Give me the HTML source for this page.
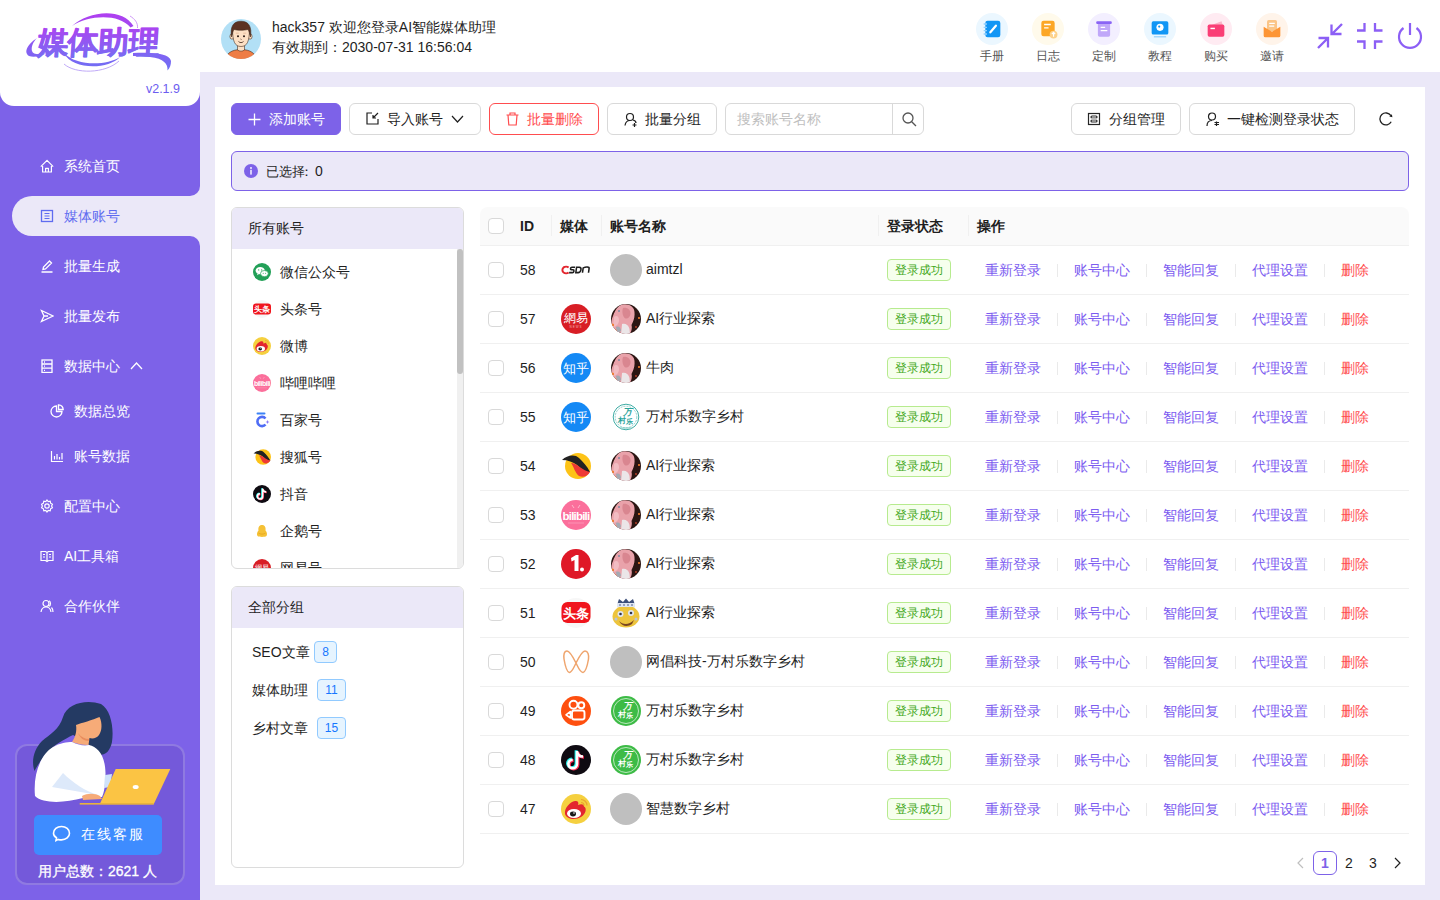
<!DOCTYPE html>
<html><head><meta charset="utf-8">
<style>
*{box-sizing:border-box;margin:0;padding:0}
html,body{width:1440px;height:900px;overflow:hidden;background:#ebe8f8;font-family:"Liberation Sans",sans-serif;color:#1f1f1f}
.abs{position:absolute}
#sb{position:absolute;left:0;top:0;width:200px;height:900px;background:#ebe8f8}
.pur{position:absolute;background:#7d62e8}
.logo{position:absolute;left:0;top:0;width:200px;height:106px;background:#fff;border-radius:0 0 14px 14px}
.mi{position:absolute;left:0;width:200px;height:40px;color:#fff;font-size:14px;line-height:40px}
.mi svg{position:absolute;top:13px}
.mi span{position:absolute;left:64px}
#hd{position:absolute;left:200px;top:0;width:1240px;height:72px;background:#fff}
#card{position:absolute;left:215px;top:87px;width:1210px;height:798px;background:#fff}
.btn{position:absolute;top:103px;height:32px;border:1px solid #d9d9d9;border-radius:6px;background:#fff;font-size:14px;line-height:30px;color:#1f1f1f;white-space:nowrap}
.btn svg{position:absolute;top:8px}
.btn span{position:absolute}
.tb{position:absolute;top:13px;width:32px;height:60px}
.tc{position:absolute;left:0;top:0;width:32px;height:32px;border-radius:50%}
.tc svg{position:absolute;left:6px;top:6px;width:20px;height:20px}
.tl{position:absolute;left:-10px;width:52px;top:34.5px;text-align:center;font-size:12px;line-height:17px;color:#555}
.pri{background:#7d62e8;border-color:#7d62e8;color:#fff}
.panel{position:absolute;left:231px;width:233px;border:1px solid #dcdcdc;border-radius:6px;background:#fff;overflow:hidden}
.ph{position:absolute;left:0;top:0;width:100%;height:41px;background:#ebe8f8;font-size:14px;line-height:41px;padding-left:16px;color:#1f1f1f}
.li{position:absolute;left:21px;height:20px;width:200px}
.li svg{position:absolute;left:0;top:1px}
.li span{position:absolute;left:27px;top:0;font-size:14px;line-height:20px;color:#1f1f1f}
.bdg{position:absolute;height:22px;border:1px solid #91caff;background:#e6f4ff;color:#1677ff;border-radius:4px;font-size:12px;line-height:20px;text-align:center}
.cb{position:absolute;width:16px;height:16px;border:1px solid #d9d9d9;border-radius:4px;background:#fff}
.th{position:absolute;top:216px;font-size:14px;line-height:20px;font-weight:700;color:#1f1f1f}
.td{position:absolute;font-size:14px;line-height:20px;color:#1f1f1f;white-space:nowrap}
.av{width:32px;height:32px;border-radius:50%}
.avs{display:block}
.tag{position:absolute;width:64px;height:22px;border:1px solid #b7eb8f;background:#f6ffed;color:#43a81a;border-radius:4px;font-size:12px;line-height:20px;text-align:center}
.halt{font-feature-settings:"halt"}
</style></head><body>
<div id="sb">
  <div class="pur" style="left:0;top:0;width:200px;height:196px;border-radius:0 0 10px 0"></div>
  <div class="pur" style="left:0;top:186px;width:40px;height:60px"></div>
  <div class="pur" style="left:0;top:236px;width:200px;height:664px;border-radius:0 10px 0 0"></div>
  <div class="abs" style="left:12px;top:196px;width:188px;height:40px;background:#ebe8f8;border-radius:20px 0 0 20px"></div>
  <div class="logo">
    <svg class="abs" style="left:0;top:0" width="200" height="106" viewBox="0 0 200 106">
      <defs>
        <linearGradient id="lg" x1="0" y1="0" x2="0" y2="1" gradientUnits="userSpaceOnUse">
          <stop offset="0" stop-color="#b13ef0"/>
          <stop offset="1" stop-color="#6f6cf2"/>
        </linearGradient>
        <linearGradient id="lg2" x1="0" y1="12" x2="0" y2="72" gradientUnits="userSpaceOnUse">
          <stop offset="0" stop-color="#b23df0"/>
          <stop offset="1" stop-color="#6c72f4"/>
        </linearGradient>
      <linearGradient id="lg3" x1="0" y1="-30" x2="0" y2="4" gradientUnits="userSpaceOnUse"><stop offset="0" stop-color="#b33ef0"/><stop offset="1" stop-color="#7a6af3"/></linearGradient>
      </defs>
      <path d="M72 26 C 88 11, 122 7, 133.5 26 L 130.5 27.5 C 119 13, 88 15, 72 26 Z" fill="url(#lg2)"/>
      <path d="M130 16 C 135 19, 138 23, 137.5 28" stroke="#c98df6" stroke-width="0.9" fill="none"/>
      <path d="M37 38 C 28 44, 23 52, 29 56 C 34 58, 41 56, 47 53 C 40 55, 33 55, 32 51 C 31 47, 33 42, 37 38 Z" fill="url(#lg2)"/>
      <path d="M64 53 C 72 70, 108 70, 120 57 C 106 66, 76 66, 64 53 Z" fill="url(#lg2)"/>
      <path d="M64 64 C 75 74, 105 74, 119 61" stroke="#b9a0f6" stroke-width="0.9" fill="none"/>
      <path d="M133 53 C 150 52, 170 53, 171 61 C 171 65, 170 68, 167.5 70.5 C 168 64, 164 58.5, 150 57 C 145 56.5, 138 56, 133 56 Z" fill="url(#lg2)"/>
      <text x="0" y="0" font-size="31" font-weight="900" fill="url(#lg3)" stroke="url(#lg3)" stroke-width="0.7" stroke-linejoin="round" letter-spacing="-0.5" transform="translate(36.5,52.5) skewX(-4)">媒体助理</text>
    </svg>
    <div class="abs" style="right:20px;top:80.5px;font-size:12.5px;color:#6c5cf0;line-height:17px">v2.1.9</div>
  </div>
  <div class="mi" style="top:146px"><svg style="left:40px" width="14" height="14" viewBox="0 0 14 14" fill="none" stroke="#fff" stroke-width="1.3"><path d="M0.8 7.6 L7 1.3 L13.2 7.6 M2.6 5.8 V13 H11.4 V5.8 M5.6 13 V9.4 H8.4 V13" stroke-width="1.2" stroke-linejoin="round"/></svg><span>系统首页</span></div>
  <div class="mi" style="top:196px;color:#5f6cf0"><svg style="left:40px" width="14" height="14" viewBox="0 0 14 14" fill="none" stroke="#5f6cf0" stroke-width="1.3"><rect x="1.5" y="1.5" width="11" height="11"/><path d="M4.5 4.5 H9.5 M4.5 7 H9.5 M4.5 9.5 H9.5" stroke-width="1"/></svg><span>媒体账号</span></div>
  <div class="mi" style="top:246px"><svg style="left:40px" width="14" height="14" viewBox="0 0 14 14" fill="none" stroke="#fff" stroke-width="1.3"><path d="M1.5 13 H12.5 M3 10.5 L3.5 8 L9.5 2 L11.5 4 L5.5 10 Z"/></svg><span>批量生成</span></div>
  <div class="mi" style="top:296px"><svg style="left:40px" width="14" height="14" viewBox="0 0 14 14" fill="none" stroke="#fff" stroke-width="1.3"><path d="M1.5 1.5 L13 7 L1.5 12.5 L4 7 Z M4 7 H8"/></svg><span>批量发布</span></div>
  <div class="mi" style="top:346px"><svg style="left:40px" width="14" height="14" viewBox="0 0 14 14" fill="none" stroke="#fff" stroke-width="1.3"><rect x="2" y="1" width="10" height="12.5"/><path d="M2 5 H12 M2 9.2 H12 M4 3 H5 M4 7.1 H5 M4 11.3 H5"/></svg><span>数据中心</span><svg style="left:130px;top:15px" width="13" height="9" viewBox="0 0 13 9" fill="none" stroke="#fff" stroke-width="1.3"><path d="M1 8 L6.5 2 L12 8"/></svg></div>
  <div class="mi" style="top:391px"><svg style="left:50px" width="14" height="14" viewBox="0 0 14 14" fill="none" stroke="#fff" stroke-width="1.3"><path d="M6.5 2 A5.5 5.5 0 1 0 12 7.5 H6.5 Z M8.5 0.8 A5 5 0 0 1 13.2 5.5 H8.5 Z"/></svg><span style="left:74px">数据总览</span></div>
  <div class="mi" style="top:436px"><svg style="left:50px" width="14" height="14" viewBox="0 0 14 14" fill="none" stroke="#fff" stroke-width="1.2"><path d="M1.5 2 V12.5 H13 M4.5 10.5 V7 M7 10.5 V5 M9.5 10.5 V8 M12 10.5 V4"/></svg><span style="left:74px">账号数据</span></div>
  <div class="mi" style="top:486px"><svg style="left:40px" width="14" height="14" viewBox="0 0 14 14" fill="none" stroke="#fff" stroke-width="1.2"><path d="M7 1 L8.2 2.6 L10.2 2.2 L10.6 4.2 L12.4 5.2 L11.6 7 L12.4 8.8 L10.6 9.8 L10.2 11.8 L8.2 11.4 L7 13 L5.8 11.4 L3.8 11.8 L3.4 9.8 L1.6 8.8 L2.4 7 L1.6 5.2 L3.4 4.2 L3.8 2.2 L5.8 2.6 Z"/><circle cx="7" cy="7" r="2.2"/></svg><span>配置中心</span></div>
  <div class="mi" style="top:536px"><svg style="left:40px" width="14" height="14" viewBox="0 0 14 14" fill="none" stroke="#fff" stroke-width="1.2"><path d="M1 2.5 H5.5 L7 3.5 L8.5 2.5 H13 V11.5 H8.5 L7 12.5 L5.5 11.5 H1 Z M7 3.5 V12.5 M3 5.5 H5 M3 8 H5 M9 5.5 H11 M9 8 H11"/></svg><span>AI工具箱</span></div>
  <div class="mi" style="top:586px"><svg style="left:40px" width="14" height="14" viewBox="0 0 14 14" fill="none" stroke="#fff" stroke-width="1.2"><circle cx="6" cy="4.5" r="3"/><path d="M1 13 C1.5 9.5 3.5 8 6 8 C8.5 8 10.5 9.5 11 13 M9 1.8 C11 2.5 11 6.5 9 7.2 M11.5 8.5 C12.5 9.5 13 11 13 13"/></svg><span>合作伙伴</span></div>

  <div class="abs" style="left:15px;top:744px;width:170px;height:141px;border-radius:12px;background:#7459da;border:2px solid rgba(255,255,255,0.2)"></div>
  <svg class="abs" style="left:25px;top:695px" width="150" height="120" viewBox="0 0 150 120">
    <path d="M38 22 C 42 8, 62 4, 76 9 C 86 15, 89 33, 87 47 C 85 56, 81 60, 74 60 L 60 46 L 48 40 C 40 44, 28 50, 20 60 C 14 68, 11 73, 9.5 76 C 6 66, 9 54, 17 46 C 25 39, 34 35, 38 22 Z" fill="#243a63"/>
    <path d="M51 30 C 56 28, 68 25, 74.5 22 C 77.5 28, 77 36, 74 40 C 72 43, 68 44, 64.5 43 L 63.5 50 C 58 50, 52 49, 47 47 C 50.5 42, 52 36, 51 30 Z" fill="#f6ab78"/>
    <path d="M53 38 C 56 42, 60 44, 64 44 L 63.8 46 C 59 46, 55 43, 53 38 Z" fill="#e98d5e"/>
    <path d="M10 101 C 8 80, 15 60, 28 52 C 35 48, 42 47, 47 47 C 53 50, 59 51, 64 50 C 73 52, 80 60, 80.5 78 C 80.5 90, 79 98, 77 102 L 58 103 C 40 108, 18 109, 10 101 Z" fill="#fff"/>
    <path d="M27 92 L 38 78 C 48 88, 60 96, 73 100 Z" fill="#dde9fa"/>
    <path d="M80 80 L 87 79 L 85 92 L 79 93 Z" fill="#cfe2fa"/>
    <path d="M57 101 C 62 98, 70 98, 75 101 L 77 104 L 58 105 Z" fill="#f6ab78"/>
    <path d="M90.7 74 H 145.3 L 128.7 109.3 H 74.7 Z" fill="#fbc444"/>
    <rect x="54.7" y="108" width="74" height="1.6" fill="#e8b23c"/>
    <ellipse cx="110.7" cy="92" rx="3" ry="2" fill="#fff"/>
  </svg>
  <div class="abs" style="left:34px;top:815px;width:128px;height:40px;border-radius:5px;background:#3e8cff;color:#fff;font-size:14px;line-height:38px">
    <svg class="abs" style="left:18px;top:10px" width="19" height="18" viewBox="0 0 19 18" fill="none" stroke="#fff" stroke-width="1.6"><path d="M4 15.5 L4.5 12.8 C2.6 11.6 1.5 10 1.5 8.2 C1.5 4.5 5 1.5 9.5 1.5 C14 1.5 17.5 4.5 17.5 8.2 C17.5 11.9 14 14.9 9.5 14.9 C8.4 14.9 7.3 14.7 6.3 14.4 Z"/></svg>
    <span class="abs" style="left:47px;letter-spacing:2px">在线客服</span>
  </div>
  <div class="abs" style="left:38px;top:861px;font-size:14px;line-height:20px;color:#fff;font-weight:500;-webkit-text-stroke:0.3px #fff">用户总数：2621 人</div>
</div>
<div id="hd">
  <svg class="abs" style="left:21px;top:19px" width="40" height="40" viewBox="0 0 40 40">
    <circle cx="20" cy="20" r="20" fill="#b2e0f6"/>
    <clipPath id="avc"><circle cx="20" cy="20" r="20"/></clipPath>
    <g clip-path="url(#avc)" stroke="#3d2418" stroke-width="0.55">
      <path d="M4 42 C 5 34, 11 30.5, 20 30.5 C 29 30.5, 35 34, 36 42 Z" fill="#ee7d45"/>
      <path d="M16.5 25 H23.5 V31 C 21.5 32.5, 18.5 32.5, 16.5 31 Z" fill="#fde0c4"/>
      <ellipse cx="11" cy="17.5" rx="2.1" ry="2.7" fill="#fde0c4"/>
      <ellipse cx="29" cy="17.5" rx="2.1" ry="2.7" fill="#fde0c4"/>
      <path d="M11.5 9 C 11.5 23, 14 27.5, 20 27.5 C 26 27.5, 28.5 23, 28.5 9 Z" fill="#fde0c4"/>
      <path d="M10.5 18 C 9 8, 12 2.2, 20 2.2 C 28 2.2, 31 8, 29.5 18 C 28.5 14, 28 12, 27 10.5 C 23 11.5, 16 11.5, 13 10.5 C 12 12, 11.5 14, 10.5 18 Z" fill="#5b3222"/>
    </g>
    <circle cx="17" cy="17.2" r="1" fill="#2a1a14"/>
    <circle cx="23" cy="17.2" r="1" fill="#2a1a14"/>
    <path d="M14.8 14.2 H17.8 M22.2 14.2 H25.2" stroke="#e3b898" stroke-width="0.8"/>
    <path d="M19.5 20 L20.5 20.5" stroke="#3d2418" stroke-width="0.7"/>
    <path d="M17.5 22.5 C 19 24, 21 24, 22.5 22.5" stroke="#3d2418" stroke-width="0.8" fill="none"/>
  </svg>
  <div class="abs" style="left:72px;top:17px;font-size:14px;line-height:20px;color:#1f1f1f;white-space:nowrap">hack357 欢迎您登录AI智能媒体助理</div>
  <div class="abs" style="left:72px;top:37px;font-size:14px;line-height:20px;color:#1f1f1f;white-space:nowrap">有效期到：2030-07-31 16:56:04</div>

  <div class="tb" style="left:776px"><div class="tc" style="background:#ebf7ff"><svg width="18" height="18" viewBox="0 0 18 18"><rect x="3" y="1.5" width="13.5" height="15" rx="2" fill="#1296f5"/><path d="M1.5 4.5 H4.5 M1.5 7.5 H4.5 M1.5 10.5 H4.5 M1.5 13.5 H4.5" stroke="#8fd0ff" stroke-width="1.2"/><path d="M7.5 12 L12.5 6" stroke="#fff" stroke-width="2" stroke-linecap="round"/></svg></div><div class="tl">手册</div></div>
  <div class="tb" style="left:832px"><div class="tc" style="background:#fffaeb"><svg width="18" height="18" viewBox="0 0 18 18"><rect x="3" y="1.5" width="12" height="14" rx="2" fill="#fca726"/><path d="M5.5 5 H11.5 M5.5 8 H9.5" stroke="#fff" stroke-width="1.3"/><circle cx="14" cy="14" r="3.5" fill="#fdd28a"/><path d="M14 12 V16 M12.5 13.5 L14 12 L15.5 13.5" stroke="#fff" stroke-width="1"/></svg></div><div class="tl">日志</div></div>
  <div class="tb" style="left:888px"><div class="tc" style="background:#f3efff"><svg width="18" height="18" viewBox="0 0 18 18"><rect x="3.5" y="3" width="11" height="13" rx="1.5" fill="#c0a7f9"/><rect x="2" y="2" width="14" height="2.5" rx="1" fill="#8a64f5"/><path d="M6 7.5 H10 M6 10.5 H12" stroke="#fff" stroke-width="1.2"/></svg></div><div class="tl">定制</div></div>
  <div class="tb" style="left:944px"><div class="tc" style="background:#ebf7ff"><svg width="18" height="18" viewBox="0 0 18 18"><rect x="1.5" y="2" width="15" height="12" rx="1.5" fill="#1296f5"/><circle cx="9" cy="7.5" r="3.2" fill="#fff"/><circle cx="8.3" cy="6.8" r="1" fill="#1296f5"/><path d="M3.5 16 H14.5" stroke="#9dd4fb" stroke-width="1.2"/></svg></div><div class="tl">教程</div></div>
  <div class="tb" style="left:1000px"><div class="tc" style="background:#ffebf2"><svg width="18" height="18" viewBox="0 0 18 18"><path d="M5 5.5 L14 2 L15 5.5 Z" fill="#fbb4c8"/><rect x="1.5" y="5" width="15" height="11" rx="1.5" fill="#fa3e76"/><path d="M4 8.5 H8" stroke="#fff" stroke-width="1.3"/></svg></div><div class="tl">购买</div></div>
  <div class="tb" style="left:1056px"><div class="tc" style="background:#fff4ea"><svg width="18" height="18" viewBox="0 0 18 18"><rect x="4.5" y="1" width="9" height="10" rx="1.5" fill="#fbc587"/><path d="M6.5 4 H11.5 M6.5 6.5 H11" stroke="#fff" stroke-width="1.1"/><path d="M1.5 7 L9 11.5 L16.5 7 V15 A1.5 1.5 0 0 1 15 16.5 H3 A1.5 1.5 0 0 1 1.5 15 Z" fill="#fd9535"/></svg></div><div class="tl">邀请</div></div>

  <svg class="abs" style="left:1117px;top:23px" width="26" height="26" viewBox="0 0 26 26" fill="none" stroke="#8c5ff5" stroke-width="2.3"><path d="M1 25 L11 15 M1.5 15 H11 V24.5 M25 1 L15 11 M14.5 1.5 V11 H24.5"/></svg>
  <svg class="abs" style="left:1157px;top:23px" width="26" height="26" viewBox="0 0 26 26" fill="none" stroke="#8c5ff5" stroke-width="2.3"><path d="M0 7.5 H7.5 V0 M18 0 V7.5 H25.5 M0 18.5 H7.5 V26 M18 26 V18.5 H25.5"/></svg>
  <svg class="abs" style="left:1197px;top:23px" width="26" height="26" viewBox="0 0 26 26" fill="none" stroke="#8c5ff5" stroke-width="2.2"><path d="M6.5 5 A11 11 0 1 0 19.5 5 M13 0 V12"/></svg>
</div>
<div id="card"></div>
<div id="main">
<div class="btn pri" style="left:231px;width:110px"><svg style="left:16px;top:9px" width="13" height="13" viewBox="0 0 13 13" stroke="#fff" stroke-width="1.3"><path d="M6.5 0.5 V12.5 M0.5 6.5 H12.5"/></svg><span style="left:37px">添加账号</span></div>
<div class="btn" style="left:349px;width:132px"><svg style="left:16px;top:8px" width="13" height="13" viewBox="0 0 13 13" fill="none" stroke="#1f1f1f" stroke-width="1.2"><path d="M6 1 H1 V12 H12 V7 M12 1 L7 6 M7 3 V6 H10"/></svg><span style="left:37px">导入账号</span><svg style="left:101px;top:9px" width="13" height="12" viewBox="0 0 13 12" fill="none" stroke="#1f1f1f" stroke-width="1.2"><path d="M1 3 L6.5 9 L12 3"/></svg></div>
<div class="btn" style="left:489px;width:110px;border-color:#ff4d4f;color:#ff4d4f"><svg style="left:16px;top:8px" width="13" height="14" viewBox="0 0 13 14" fill="none" stroke="#ff4d4f" stroke-width="1.2"><path d="M0.5 3 H12.5 M4 3 V1 H9 V3 M2 3 L2.8 13 H10.2 L11 3"/></svg><span style="left:37px">批量删除</span></div>
<div class="btn" style="left:607px;width:110px"><svg style="left:16px;top:8px" width="14" height="15" viewBox="0 0 14 15" fill="none" stroke="#1f1f1f" stroke-width="1.2"><circle cx="6" cy="5" r="3.5"/><path d="M1 13.5 C 1.5 10, 3 8.5, 6 8.5 M9 8 C 11 8.5, 12 10, 12 11 M10.5 11 V15 M8.5 13 H12.5"/></svg><span style="left:37px">批量分组</span></div>
<div class="abs" style="left:725px;top:103px;width:199px;height:32px;border:1px solid #d9d9d9;border-radius:6px;background:#fff"><span class="abs" style="left:11px;top:5px;font-size:14px;line-height:20px;color:#bfbfbf">搜索账号名称</span><div class="abs" style="left:166px;top:0;width:1px;height:30px;background:#d9d9d9"></div><svg class="abs" style="left:176px;top:8px" width="15" height="15" viewBox="0 0 15 15" fill="none" stroke="#555" stroke-width="1.3"><circle cx="6" cy="6" r="5"/><path d="M9.7 9.7 L14 14"/></svg></div>
<div class="btn" style="left:1071px;width:110px"><svg style="left:15px;top:8px" width="14" height="14" viewBox="0 0 14 14" fill="none" stroke="#262626" stroke-width="1.2"><rect x="1.5" y="1.5" width="11" height="11"/><rect x="4" y="4" width="6" height="2" rx="1"/><rect x="4" y="8" width="6" height="2" rx="1"/><rect x="4" y="6.3" width="6" height="1.4" fill="#c8c8c8" stroke="none"/></svg><span style="left:37px">分组管理</span></div>
<div class="btn" style="left:1189px;width:166px"><svg style="left:16px;top:8px" width="14" height="15" viewBox="0 0 14 15" fill="none" stroke="#1f1f1f" stroke-width="1.2"><circle cx="6" cy="4.5" r="3.5"/><path d="M1 14 C 1 10.5, 3 8.5, 6 8.5 M8.5 10.5 H13 M8.5 12.5 H13 M10.5 9.5 V14"/></svg><span style="left:37px">一键检测登录状态</span></div>
<svg class="abs" style="left:1379px;top:112px" width="14" height="14" viewBox="0 0 14 14" fill="none" stroke="#1f1f1f" stroke-width="1.3"><path d="M11.9 3.6 A6 6 0 1 0 12.2 9.8"/><path d="M10.3 4.6 L13.4 5.3 L12.9 2.2 Z" fill="#1f1f1f" stroke="none"/></svg>
<div class="abs" style="left:231px;top:151px;width:1178px;height:40px;border:1px solid #7d62e8;border-radius:6px;background:#ebe8f8"><svg class="abs" style="left:12px;top:12px" width="14" height="14" viewBox="0 0 14 14"><circle cx="7" cy="7" r="7" fill="#7d62e8"/><circle cx="7" cy="4" r="0.9" fill="#fff"/><rect x="6.3" y="5.8" width="1.4" height="4.8" fill="#fff"/></svg><span class="abs" style="left:34px;top:9px;font-size:12.5px;line-height:20px;color:#1f1f1f">已选择<span style="margin-left:-5px;margin-right:2px">：</span><span style="font-size:14px">0</span></span></div>
<div class="panel" style="top:207px;height:362px"><div class="ph">所有账号</div>
<div class="li" style="top:54px"><svg width="18" height="18" viewBox="0 0 18 18"><circle cx="9" cy="9" r="9" fill="#23a058"/><ellipse cx="7.2" cy="7.6" rx="4.6" ry="3.7" fill="#fff"/><path d="M4.5 10.5 L4 12.3 L6 11" fill="#fff"/><ellipse cx="11.4" cy="10.6" rx="3.9" ry="3.1" fill="#fff" stroke="#23a058" stroke-width="0.7"/><circle cx="5.7" cy="6.9" r="0.6" fill="#23a058"/><circle cx="8.7" cy="6.9" r="0.6" fill="#23a058"/><circle cx="10.2" cy="10.2" r="0.5" fill="#23a058"/><circle cx="12.6" cy="10.2" r="0.5" fill="#23a058"/></svg><span>微信公众号</span></div>
<div class="li" style="top:91px"><svg width="18" height="18" viewBox="0 0 18 18"><circle cx="9" cy="9" r="9" fill="#f6f6f6"/><rect x="0" y="3.5" width="18" height="11" rx="3" fill="#f0151d"/><text x="9" y="11.8" text-anchor="middle" font-size="7.8" font-weight="700" fill="#fff">头条</text></svg><span>头条号</span></div>
<div class="li" style="top:128px"><svg width="18" height="18" viewBox="0 0 30 30"><circle cx="15" cy="15" r="15" fill="#f5d03f"/><path d="M4 20 C 3 14, 9 8, 14 7 C 17 6.5, 18 8.5, 17 11 C 20 9.5, 23 10, 23 12.5 C 26 14, 25 20, 20 23 C 15 26, 6 26, 4 20 Z" fill="#e3262f"/><ellipse cx="13" cy="19.5" rx="7" ry="4.6" fill="#fff"/><ellipse cx="12" cy="20" rx="3" ry="2.4" fill="#1a1a1a"/><circle cx="13" cy="19" r="0.8" fill="#fff"/><path d="M20 5.5 A6 6 0 0 1 26 11.5 M20 8.5 A3 3 0 0 1 23 11.5" stroke="#e9a531" stroke-width="1.2" fill="none"/></svg><span>微博</span></div>
<div class="li" style="top:165px"><svg width="18" height="18" viewBox="0 0 30 30"><circle cx="15" cy="15" r="15" fill="#fb6f9b"/><path d="M11 5 L13 8 M19 5 L17 8" stroke="#fdb6cc" stroke-width="1"/><text x="15" y="19.5" text-anchor="middle" font-family="Liberation Sans" font-size="11.5" font-weight="700" fill="#fff" letter-spacing="-0.8">bilibili</text><path d="M7 23 H23" stroke="#fd9cbb" stroke-width="0.8"/></svg><span>哔哩哔哩</span></div>
<div class="li" style="top:202px"><svg width="18" height="18" viewBox="0 0 18 18"><rect x="3.5" y="1.5" width="9" height="2" rx="1" fill="#3b82f6"/><path d="M12.5 7.5 A4.6 4.6 0 1 0 12.5 13.5" stroke="#4f6df5" stroke-width="2.6" fill="none"/><path d="M14.5 9 L15.2 10.5 L16.5 11 L15.2 11.5 L14.5 13 L13.8 11.5 L12.5 11 L13.8 10.5 Z" fill="#8b7bf7"/></svg><span>百家号</span></div>
<div class="li" style="top:239px"><svg width="18" height="18" viewBox="0 0 30 30"><circle cx="17" cy="15" r="13" fill="#fdc317"/><path d="M1 9 C 6 4, 14 3, 18 7 C 22 11, 26 15, 29 21 C 24 22, 19 17, 16 14 C 12 11, 7 9, 1 9 Z" fill="#222"/><path d="M10 12 C 16 12, 22 20, 29 21 C 27 25, 22 27, 18 25 C 14 22, 13 16, 10 12 Z" fill="#ee3a35"/></svg><span>搜狐号</span></div>
<div class="li" style="top:276px"><svg width="18" height="18" viewBox="0 0 30 30"><circle cx="15" cy="15" r="15" fill="#0f0b12"/><g transform="translate(-1,0)"><path d="M17 6 V19 A4.3 4.3 0 1 1 12.7 14.7" stroke="#25f4ee" stroke-width="3" fill="none" transform="translate(-0.9,-0.7)"/><path d="M17 6 V19 A4.3 4.3 0 1 1 12.7 14.7 M17 6.5 C 17.5 9.5, 20 11.5, 23 11.5" stroke="#fe2c55" stroke-width="3" fill="none" transform="translate(0.9,0.7)"/><path d="M17 6 V19 A4.3 4.3 0 1 1 12.7 14.7 M17 6.5 C 17.5 9.5, 20 11.5, 23 11.5" stroke="#fff" stroke-width="2.6" fill="none"/></g></svg><span>抖音</span></div>
<div class="li" style="top:313px"><svg width="18" height="18" viewBox="0 0 18 18"><path d="M9 3 C 6 3, 5 5.5, 5.5 8.5 C 4 10, 3.5 12.5, 4.5 14 C 6.5 15.2, 11.5 15.2, 13.5 14 C 14.5 12.5, 14 10, 12.5 8.5 C 13 5.5, 12 3, 9 3 Z" fill="#f5c136"/><path d="M5.5 11 C 7 12.5, 11 12.5, 12.5 11" stroke="#e6a51c" stroke-width="0.8" fill="none"/></svg><span>企鹅号</span></div>
<div class="li" style="top:350px"><svg width="18" height="18" viewBox="0 0 30 30"><circle cx="15" cy="15" r="15" fill="#d81e25"/><text x="15" y="17.5" text-anchor="middle" font-size="12" fill="#fff">網易</text><text x="15" y="23.5" text-anchor="middle" font-size="3" fill="#f5b5b5" letter-spacing="1">NEWS</text></svg><span>网易号</span></div>
<div class="abs" style="left:225px;top:41px;width:6px;height:320px;background:#f0f0f0;border-radius:0 0 3px 3px"></div><div class="abs" style="left:225px;top:41px;width:6px;height:125px;background:#c1c1c1;border-radius:3px"></div>
</div>
<div class="panel" style="top:586px;height:282px"><div class="ph">全部分组</div>
<span class="abs" style="left:20px;top:55px;font-size:14px;line-height:20px;color:#1f1f1f">SEO文章</span><div class="bdg" style="left:82px;top:54px;width:23px">8</div>
<span class="abs" style="left:20px;top:93px;font-size:14px;line-height:20px;color:#1f1f1f">媒体助理</span><div class="bdg" style="left:85px;top:92px;width:29px">11</div>
<span class="abs" style="left:20px;top:131px;font-size:14px;line-height:20px;color:#1f1f1f">乡村文章</span><div class="bdg" style="left:85px;top:130px;width:29px">15</div>
</div>
<div class="abs" style="left:480px;top:207px;width:929px;height:39px;background:#fafafa;border-radius:8px 8px 0 0;border-bottom:1px solid #f0f0f0"></div>
<div class="cb" style="left:488px;top:218px"></div>
<span class="th" style="left:520px">ID</span>
<span class="th" style="left:560px">媒体</span>
<span class="th" style="left:610px">账号名称</span>
<span class="th" style="left:887px">登录状态</span>
<span class="th" style="left:977px">操作</span>
<div class="abs" style="left:551px;top:215px;width:1px;height:21px;background:#f0f0f0"></div>
<div class="abs" style="left:601px;top:215px;width:1px;height:21px;background:#f0f0f0"></div>
<div class="abs" style="left:878px;top:215px;width:1px;height:21px;background:#f0f0f0"></div>
<div class="abs" style="left:968px;top:215px;width:1px;height:21px;background:#f0f0f0"></div>
<div class="abs" style="left:480px;top:246px;width:929px;height:49px;border-bottom:1px solid #f0f0f0"></div>
<div class="cb" style="left:488px;top:262px"></div>
<span class="td" style="left:520px;top:260px">58</span>
<div class="abs" style="left:561px;top:255px;width:30px;height:30px"><svg width="30" height="30" viewBox="0 0 30 30" fill="none"><path d="M7.6 12.4 C 6.5 11.5, 4 11.3, 2.6 12.4 C 1 13.8, 1 16.4, 2.6 17.5 C 4 18.5, 6.5 18.3, 7.6 17.4" stroke="#e3262e" stroke-width="2"/><g transform="skewX(-8) translate(2,0)" stroke="#1e1e1e" stroke-width="1.55"><path d="M13.8 12.2 H10.6 C9 12.2 9 14.7 10.6 14.7 H12 C13.6 14.7 13.6 17.6 12 17.6 H8.6"/><path d="M15.3 12.2 V17.6 H17.6 C20.6 17.6 20.9 12.2 18 12.2 Z"/><path d="M22 17.8 V12.9 C 24.5 11.7, 28 11.8, 28 13.4 V17.8"/></g></svg></div>
<div class="abs" style="left:610px;top:254px;width:32px;height:32px"><div class="av" style="background:#bfbfbf"></div></div>
<span class="td" style="left:646px;top:259px">aimtzl</span>
<div class="tag" style="left:887px;top:259px">登录成功</div>
<span class="td" style="left:985px;top:260px;color:#7c5cf0">重新登录</span>
<span class="td" style="left:1074px;top:260px;color:#7c5cf0">账号中心</span>
<span class="td" style="left:1163px;top:260px;color:#7c5cf0">智能回复</span>
<span class="td" style="left:1252px;top:260px;color:#7c5cf0">代理设置</span>
<span class="td" style="left:1341px;top:260px;color:#ff4d4f">删除</span>
<div class="abs" style="left:1057px;top:264px;width:1px;height:13px;background:#eaeaea"></div>
<div class="abs" style="left:1146px;top:264px;width:1px;height:13px;background:#eaeaea"></div>
<div class="abs" style="left:1235px;top:264px;width:1px;height:13px;background:#eaeaea"></div>
<div class="abs" style="left:1324px;top:264px;width:1px;height:13px;background:#eaeaea"></div>
<div class="abs" style="left:480px;top:295px;width:929px;height:49px;border-bottom:1px solid #f0f0f0"></div>
<div class="cb" style="left:488px;top:311px"></div>
<span class="td" style="left:520px;top:309px">57</span>
<div class="abs" style="left:561px;top:304px;width:30px;height:30px"><svg width="30" height="30" viewBox="0 0 30 30"><circle cx="15" cy="15" r="15" fill="#d81e25"/><text x="15" y="17.5" text-anchor="middle" font-size="12" fill="#fff">網易</text><text x="15" y="23.5" text-anchor="middle" font-size="3" fill="#f5b5b5" letter-spacing="1">NEWS</text></svg></div>
<div class="abs" style="left:610px;top:303px;width:32px;height:32px"><svg class="avs" width="32" height="32" viewBox="0 0 32 32"><defs><clipPath id="cpa"><circle cx="16" cy="16" r="15"/></clipPath></defs><g clip-path="url(#cpa)"><rect width="32" height="32" fill="#2b1512"/><path d="M12 1.5 C 19 0, 25 4, 24.5 10 C 25 15, 23 19, 21.5 22 C 22.5 26, 21 30, 19 32 L 2 32 C 0.5 26, 0.5 18, 3 13 C 5 7, 8 3, 12 1.5 Z" fill="#e9a2aa"/><path d="M13 5 C 17 4, 21 7, 20.5 11 C 20 14, 18 16, 15.5 15.5 C 13 14.5, 11.5 9, 13 5 Z" fill="#d98690"/><path d="M4 14 C 6 12, 9 13, 9 17 C 9 21, 6 24, 3 24 Z" fill="#f2bcc2"/><path d="M12 21 C 15.5 20, 18.5 22, 19.5 26 L 20 32 L 11 32 Z" fill="#ebe6e8"/><path d="M6 24 C 8.5 22.5, 11 24.5, 11 28 L 7 31 Z" fill="#a4a9b2"/><circle cx="2.5" cy="22" r="1.6" fill="#f07a2a"/><circle cx="5" cy="28" r="1.8" fill="#f27b2c"/><circle cx="29" cy="15" r="1.1" fill="#f27b2c"/><circle cx="26" cy="24" r="0.9" fill="#c0432a"/><circle cx="9" cy="8" r="1" fill="#7e8aa0"/></g></svg></div>
<span class="td" style="left:646px;top:308px">AI行业探索</span>
<div class="tag" style="left:887px;top:308px">登录成功</div>
<span class="td" style="left:985px;top:309px;color:#7c5cf0">重新登录</span>
<span class="td" style="left:1074px;top:309px;color:#7c5cf0">账号中心</span>
<span class="td" style="left:1163px;top:309px;color:#7c5cf0">智能回复</span>
<span class="td" style="left:1252px;top:309px;color:#7c5cf0">代理设置</span>
<span class="td" style="left:1341px;top:309px;color:#ff4d4f">删除</span>
<div class="abs" style="left:1057px;top:313px;width:1px;height:13px;background:#eaeaea"></div>
<div class="abs" style="left:1146px;top:313px;width:1px;height:13px;background:#eaeaea"></div>
<div class="abs" style="left:1235px;top:313px;width:1px;height:13px;background:#eaeaea"></div>
<div class="abs" style="left:1324px;top:313px;width:1px;height:13px;background:#eaeaea"></div>
<div class="abs" style="left:480px;top:344px;width:929px;height:49px;border-bottom:1px solid #f0f0f0"></div>
<div class="cb" style="left:488px;top:360px"></div>
<span class="td" style="left:520px;top:358px">56</span>
<div class="abs" style="left:561px;top:353px;width:30px;height:30px"><svg width="30" height="30" viewBox="0 0 30 30"><circle cx="15" cy="15" r="15" fill="#1489f5"/><text x="15" y="19.8" text-anchor="middle" font-size="12.5" fill="#fff">知乎</text></svg></div>
<div class="abs" style="left:610px;top:352px;width:32px;height:32px"><svg class="avs" width="32" height="32" viewBox="0 0 32 32"><defs><clipPath id="cpa"><circle cx="16" cy="16" r="15"/></clipPath></defs><g clip-path="url(#cpa)"><rect width="32" height="32" fill="#2b1512"/><path d="M12 1.5 C 19 0, 25 4, 24.5 10 C 25 15, 23 19, 21.5 22 C 22.5 26, 21 30, 19 32 L 2 32 C 0.5 26, 0.5 18, 3 13 C 5 7, 8 3, 12 1.5 Z" fill="#e9a2aa"/><path d="M13 5 C 17 4, 21 7, 20.5 11 C 20 14, 18 16, 15.5 15.5 C 13 14.5, 11.5 9, 13 5 Z" fill="#d98690"/><path d="M4 14 C 6 12, 9 13, 9 17 C 9 21, 6 24, 3 24 Z" fill="#f2bcc2"/><path d="M12 21 C 15.5 20, 18.5 22, 19.5 26 L 20 32 L 11 32 Z" fill="#ebe6e8"/><path d="M6 24 C 8.5 22.5, 11 24.5, 11 28 L 7 31 Z" fill="#a4a9b2"/><circle cx="2.5" cy="22" r="1.6" fill="#f07a2a"/><circle cx="5" cy="28" r="1.8" fill="#f27b2c"/><circle cx="29" cy="15" r="1.1" fill="#f27b2c"/><circle cx="26" cy="24" r="0.9" fill="#c0432a"/><circle cx="9" cy="8" r="1" fill="#7e8aa0"/></g></svg></div>
<span class="td" style="left:646px;top:357px">牛肉</span>
<div class="tag" style="left:887px;top:357px">登录成功</div>
<span class="td" style="left:985px;top:358px;color:#7c5cf0">重新登录</span>
<span class="td" style="left:1074px;top:358px;color:#7c5cf0">账号中心</span>
<span class="td" style="left:1163px;top:358px;color:#7c5cf0">智能回复</span>
<span class="td" style="left:1252px;top:358px;color:#7c5cf0">代理设置</span>
<span class="td" style="left:1341px;top:358px;color:#ff4d4f">删除</span>
<div class="abs" style="left:1057px;top:362px;width:1px;height:13px;background:#eaeaea"></div>
<div class="abs" style="left:1146px;top:362px;width:1px;height:13px;background:#eaeaea"></div>
<div class="abs" style="left:1235px;top:362px;width:1px;height:13px;background:#eaeaea"></div>
<div class="abs" style="left:1324px;top:362px;width:1px;height:13px;background:#eaeaea"></div>
<div class="abs" style="left:480px;top:393px;width:929px;height:49px;border-bottom:1px solid #f0f0f0"></div>
<div class="cb" style="left:488px;top:409px"></div>
<span class="td" style="left:520px;top:407px">55</span>
<div class="abs" style="left:561px;top:402px;width:30px;height:30px"><svg width="30" height="30" viewBox="0 0 30 30"><circle cx="15" cy="15" r="15" fill="#1489f5"/><text x="15" y="19.8" text-anchor="middle" font-size="12.5" fill="#fff">知乎</text></svg></div>
<div class="abs" style="left:610px;top:401px;width:32px;height:32px"><svg class="avs" width="32" height="32" viewBox="0 0 32 32"><circle cx="16" cy="16" r="15" fill="#fff"/><circle cx="16" cy="16" r="12.8" fill="none" stroke="#2aa39a" stroke-width="0.9"/><circle cx="16" cy="16" r="10.8" fill="none" stroke="#2aa39a" stroke-width="0.5" stroke-dasharray="2 1"/><text x="17.5" y="13.5" text-anchor="middle" font-size="9" font-weight="700" fill="#2aa39a" font-style="italic">万</text><text x="11.5" y="22" text-anchor="middle" font-size="7.5" font-weight="700" fill="#2aa39a">村</text><text x="19.5" y="23" text-anchor="middle" font-size="7" font-weight="700" fill="#2aa39a">乐</text><path d="M10 27 H22" stroke="#8fd3cc" stroke-width="1.2"/></svg></div>
<span class="td" style="left:646px;top:406px">万村乐数字乡村</span>
<div class="tag" style="left:887px;top:406px">登录成功</div>
<span class="td" style="left:985px;top:407px;color:#7c5cf0">重新登录</span>
<span class="td" style="left:1074px;top:407px;color:#7c5cf0">账号中心</span>
<span class="td" style="left:1163px;top:407px;color:#7c5cf0">智能回复</span>
<span class="td" style="left:1252px;top:407px;color:#7c5cf0">代理设置</span>
<span class="td" style="left:1341px;top:407px;color:#ff4d4f">删除</span>
<div class="abs" style="left:1057px;top:411px;width:1px;height:13px;background:#eaeaea"></div>
<div class="abs" style="left:1146px;top:411px;width:1px;height:13px;background:#eaeaea"></div>
<div class="abs" style="left:1235px;top:411px;width:1px;height:13px;background:#eaeaea"></div>
<div class="abs" style="left:1324px;top:411px;width:1px;height:13px;background:#eaeaea"></div>
<div class="abs" style="left:480px;top:442px;width:929px;height:49px;border-bottom:1px solid #f0f0f0"></div>
<div class="cb" style="left:488px;top:458px"></div>
<span class="td" style="left:520px;top:456px">54</span>
<div class="abs" style="left:561px;top:451px;width:30px;height:30px"><svg width="30" height="30" viewBox="0 0 30 30"><circle cx="17" cy="15" r="13" fill="#fdc317"/><path d="M1 9 C 6 4, 14 3, 18 7 C 22 11, 26 15, 29 21 C 24 22, 19 17, 16 14 C 12 11, 7 9, 1 9 Z" fill="#222"/><path d="M10 12 C 16 12, 22 20, 29 21 C 27 25, 22 27, 18 25 C 14 22, 13 16, 10 12 Z" fill="#ee3a35"/></svg></div>
<div class="abs" style="left:610px;top:450px;width:32px;height:32px"><svg class="avs" width="32" height="32" viewBox="0 0 32 32"><defs><clipPath id="cpa"><circle cx="16" cy="16" r="15"/></clipPath></defs><g clip-path="url(#cpa)"><rect width="32" height="32" fill="#2b1512"/><path d="M12 1.5 C 19 0, 25 4, 24.5 10 C 25 15, 23 19, 21.5 22 C 22.5 26, 21 30, 19 32 L 2 32 C 0.5 26, 0.5 18, 3 13 C 5 7, 8 3, 12 1.5 Z" fill="#e9a2aa"/><path d="M13 5 C 17 4, 21 7, 20.5 11 C 20 14, 18 16, 15.5 15.5 C 13 14.5, 11.5 9, 13 5 Z" fill="#d98690"/><path d="M4 14 C 6 12, 9 13, 9 17 C 9 21, 6 24, 3 24 Z" fill="#f2bcc2"/><path d="M12 21 C 15.5 20, 18.5 22, 19.5 26 L 20 32 L 11 32 Z" fill="#ebe6e8"/><path d="M6 24 C 8.5 22.5, 11 24.5, 11 28 L 7 31 Z" fill="#a4a9b2"/><circle cx="2.5" cy="22" r="1.6" fill="#f07a2a"/><circle cx="5" cy="28" r="1.8" fill="#f27b2c"/><circle cx="29" cy="15" r="1.1" fill="#f27b2c"/><circle cx="26" cy="24" r="0.9" fill="#c0432a"/><circle cx="9" cy="8" r="1" fill="#7e8aa0"/></g></svg></div>
<span class="td" style="left:646px;top:455px">AI行业探索</span>
<div class="tag" style="left:887px;top:455px">登录成功</div>
<span class="td" style="left:985px;top:456px;color:#7c5cf0">重新登录</span>
<span class="td" style="left:1074px;top:456px;color:#7c5cf0">账号中心</span>
<span class="td" style="left:1163px;top:456px;color:#7c5cf0">智能回复</span>
<span class="td" style="left:1252px;top:456px;color:#7c5cf0">代理设置</span>
<span class="td" style="left:1341px;top:456px;color:#ff4d4f">删除</span>
<div class="abs" style="left:1057px;top:460px;width:1px;height:13px;background:#eaeaea"></div>
<div class="abs" style="left:1146px;top:460px;width:1px;height:13px;background:#eaeaea"></div>
<div class="abs" style="left:1235px;top:460px;width:1px;height:13px;background:#eaeaea"></div>
<div class="abs" style="left:1324px;top:460px;width:1px;height:13px;background:#eaeaea"></div>
<div class="abs" style="left:480px;top:491px;width:929px;height:49px;border-bottom:1px solid #f0f0f0"></div>
<div class="cb" style="left:488px;top:507px"></div>
<span class="td" style="left:520px;top:505px">53</span>
<div class="abs" style="left:561px;top:500px;width:30px;height:30px"><svg width="30" height="30" viewBox="0 0 30 30"><circle cx="15" cy="15" r="15" fill="#fb6f9b"/><path d="M11 5 L13 8 M19 5 L17 8" stroke="#fdb6cc" stroke-width="1"/><text x="15" y="19.5" text-anchor="middle" font-family="Liberation Sans" font-size="11.5" font-weight="700" fill="#fff" letter-spacing="-0.8">bilibili</text><path d="M7 23 H23" stroke="#fd9cbb" stroke-width="0.8"/></svg></div>
<div class="abs" style="left:610px;top:499px;width:32px;height:32px"><svg class="avs" width="32" height="32" viewBox="0 0 32 32"><defs><clipPath id="cpa"><circle cx="16" cy="16" r="15"/></clipPath></defs><g clip-path="url(#cpa)"><rect width="32" height="32" fill="#2b1512"/><path d="M12 1.5 C 19 0, 25 4, 24.5 10 C 25 15, 23 19, 21.5 22 C 22.5 26, 21 30, 19 32 L 2 32 C 0.5 26, 0.5 18, 3 13 C 5 7, 8 3, 12 1.5 Z" fill="#e9a2aa"/><path d="M13 5 C 17 4, 21 7, 20.5 11 C 20 14, 18 16, 15.5 15.5 C 13 14.5, 11.5 9, 13 5 Z" fill="#d98690"/><path d="M4 14 C 6 12, 9 13, 9 17 C 9 21, 6 24, 3 24 Z" fill="#f2bcc2"/><path d="M12 21 C 15.5 20, 18.5 22, 19.5 26 L 20 32 L 11 32 Z" fill="#ebe6e8"/><path d="M6 24 C 8.5 22.5, 11 24.5, 11 28 L 7 31 Z" fill="#a4a9b2"/><circle cx="2.5" cy="22" r="1.6" fill="#f07a2a"/><circle cx="5" cy="28" r="1.8" fill="#f27b2c"/><circle cx="29" cy="15" r="1.1" fill="#f27b2c"/><circle cx="26" cy="24" r="0.9" fill="#c0432a"/><circle cx="9" cy="8" r="1" fill="#7e8aa0"/></g></svg></div>
<span class="td" style="left:646px;top:504px">AI行业探索</span>
<div class="tag" style="left:887px;top:504px">登录成功</div>
<span class="td" style="left:985px;top:505px;color:#7c5cf0">重新登录</span>
<span class="td" style="left:1074px;top:505px;color:#7c5cf0">账号中心</span>
<span class="td" style="left:1163px;top:505px;color:#7c5cf0">智能回复</span>
<span class="td" style="left:1252px;top:505px;color:#7c5cf0">代理设置</span>
<span class="td" style="left:1341px;top:505px;color:#ff4d4f">删除</span>
<div class="abs" style="left:1057px;top:509px;width:1px;height:13px;background:#eaeaea"></div>
<div class="abs" style="left:1146px;top:509px;width:1px;height:13px;background:#eaeaea"></div>
<div class="abs" style="left:1235px;top:509px;width:1px;height:13px;background:#eaeaea"></div>
<div class="abs" style="left:1324px;top:509px;width:1px;height:13px;background:#eaeaea"></div>
<div class="abs" style="left:480px;top:540px;width:929px;height:49px;border-bottom:1px solid #f0f0f0"></div>
<div class="cb" style="left:488px;top:556px"></div>
<span class="td" style="left:520px;top:554px">52</span>
<div class="abs" style="left:561px;top:549px;width:30px;height:30px"><svg width="30" height="30" viewBox="0 0 30 30"><circle cx="15" cy="15" r="15" fill="#df1827"/><path d="M10 9 L15 6 H17.5 V22 H13.5 V11 L10.5 12.5 Z" fill="#fff"/><circle cx="21" cy="20.5" r="2" fill="#fff"/></svg></div>
<div class="abs" style="left:610px;top:548px;width:32px;height:32px"><svg class="avs" width="32" height="32" viewBox="0 0 32 32"><defs><clipPath id="cpa"><circle cx="16" cy="16" r="15"/></clipPath></defs><g clip-path="url(#cpa)"><rect width="32" height="32" fill="#2b1512"/><path d="M12 1.5 C 19 0, 25 4, 24.5 10 C 25 15, 23 19, 21.5 22 C 22.5 26, 21 30, 19 32 L 2 32 C 0.5 26, 0.5 18, 3 13 C 5 7, 8 3, 12 1.5 Z" fill="#e9a2aa"/><path d="M13 5 C 17 4, 21 7, 20.5 11 C 20 14, 18 16, 15.5 15.5 C 13 14.5, 11.5 9, 13 5 Z" fill="#d98690"/><path d="M4 14 C 6 12, 9 13, 9 17 C 9 21, 6 24, 3 24 Z" fill="#f2bcc2"/><path d="M12 21 C 15.5 20, 18.5 22, 19.5 26 L 20 32 L 11 32 Z" fill="#ebe6e8"/><path d="M6 24 C 8.5 22.5, 11 24.5, 11 28 L 7 31 Z" fill="#a4a9b2"/><circle cx="2.5" cy="22" r="1.6" fill="#f07a2a"/><circle cx="5" cy="28" r="1.8" fill="#f27b2c"/><circle cx="29" cy="15" r="1.1" fill="#f27b2c"/><circle cx="26" cy="24" r="0.9" fill="#c0432a"/><circle cx="9" cy="8" r="1" fill="#7e8aa0"/></g></svg></div>
<span class="td" style="left:646px;top:553px">AI行业探索</span>
<div class="tag" style="left:887px;top:553px">登录成功</div>
<span class="td" style="left:985px;top:554px;color:#7c5cf0">重新登录</span>
<span class="td" style="left:1074px;top:554px;color:#7c5cf0">账号中心</span>
<span class="td" style="left:1163px;top:554px;color:#7c5cf0">智能回复</span>
<span class="td" style="left:1252px;top:554px;color:#7c5cf0">代理设置</span>
<span class="td" style="left:1341px;top:554px;color:#ff4d4f">删除</span>
<div class="abs" style="left:1057px;top:558px;width:1px;height:13px;background:#eaeaea"></div>
<div class="abs" style="left:1146px;top:558px;width:1px;height:13px;background:#eaeaea"></div>
<div class="abs" style="left:1235px;top:558px;width:1px;height:13px;background:#eaeaea"></div>
<div class="abs" style="left:1324px;top:558px;width:1px;height:13px;background:#eaeaea"></div>
<div class="abs" style="left:480px;top:589px;width:929px;height:49px;border-bottom:1px solid #f0f0f0"></div>
<div class="cb" style="left:488px;top:605px"></div>
<span class="td" style="left:520px;top:603px">51</span>
<div class="abs" style="left:561px;top:598px;width:30px;height:30px"><svg width="30" height="30" viewBox="0 0 30 30"><circle cx="15" cy="15" r="15" fill="#f7f7f7"/><rect x="0.5" y="4" width="29" height="21" rx="6" fill="#f0151d"/><text x="15" y="19.5" text-anchor="middle" font-size="12.5" font-weight="700" fill="#fff">头条</text></svg></div>
<div class="abs" style="left:610px;top:597px;width:32px;height:32px"><svg class="avs" width="32" height="32" viewBox="0 0 32 32"><ellipse cx="16" cy="19.5" rx="13.5" ry="11" fill="#edc43c"/><path d="M7 8 L9 2 L13 5 L16 1.5 L19 5 L23 2 L25 8 Z" fill="#3c4f7a"/><rect x="7" y="6" width="18" height="4" fill="#dfe6f2"/><circle cx="10" cy="8" r="0.8" fill="#3c4f7a"/><circle cx="14" cy="8" r="0.8" fill="#3c4f7a"/><circle cx="18" cy="8" r="0.8" fill="#3c4f7a"/><circle cx="22" cy="8" r="0.8" fill="#3c4f7a"/><circle cx="10.5" cy="17" r="3" fill="#dfe6f2"/><circle cx="21" cy="16" r="3" fill="#dfe6f2"/><circle cx="10.5" cy="17" r="1.3" fill="#334"/><circle cx="21" cy="16" r="1.3" fill="#334"/><path d="M9 24 C 13 28, 19 28, 24 23 L 22 27 C 18 30, 12 30, 9 24 Z" fill="#7a4520"/><circle cx="6" cy="22" r="1.5" fill="#b9c3d6"/><circle cx="26" cy="22" r="1.5" fill="#b9c3d6"/></svg></div>
<span class="td" style="left:646px;top:602px">AI行业探索</span>
<div class="tag" style="left:887px;top:602px">登录成功</div>
<span class="td" style="left:985px;top:603px;color:#7c5cf0">重新登录</span>
<span class="td" style="left:1074px;top:603px;color:#7c5cf0">账号中心</span>
<span class="td" style="left:1163px;top:603px;color:#7c5cf0">智能回复</span>
<span class="td" style="left:1252px;top:603px;color:#7c5cf0">代理设置</span>
<span class="td" style="left:1341px;top:603px;color:#ff4d4f">删除</span>
<div class="abs" style="left:1057px;top:607px;width:1px;height:13px;background:#eaeaea"></div>
<div class="abs" style="left:1146px;top:607px;width:1px;height:13px;background:#eaeaea"></div>
<div class="abs" style="left:1235px;top:607px;width:1px;height:13px;background:#eaeaea"></div>
<div class="abs" style="left:1324px;top:607px;width:1px;height:13px;background:#eaeaea"></div>
<div class="abs" style="left:480px;top:638px;width:929px;height:49px;border-bottom:1px solid #f0f0f0"></div>
<div class="cb" style="left:488px;top:654px"></div>
<span class="td" style="left:520px;top:652px">50</span>
<div class="abs" style="left:561px;top:647px;width:30px;height:30px"><svg width="30" height="30" viewBox="0 0 30 30"><path d="M15 16 C 12 10, 9 4, 6 4 C 3 4, 2.5 8, 3 12 C 4 18, 6 25, 8.3 25.4 C 11 25.5, 13 20, 15 16 C 18 10, 21 4, 24 4 C 27 4, 28 8, 27.5 12 C 26.5 18, 24.5 25, 22 25.4 C 19 25.5, 17 20, 15 16 Z" stroke="#efa56e" stroke-width="1.5" fill="none"/></svg></div>
<div class="abs" style="left:610px;top:646px;width:32px;height:32px"><div class="av" style="background:#bfbfbf"></div></div>
<span class="td" style="left:646px;top:651px">网倡科技-万村乐数字乡村</span>
<div class="tag" style="left:887px;top:651px">登录成功</div>
<span class="td" style="left:985px;top:652px;color:#7c5cf0">重新登录</span>
<span class="td" style="left:1074px;top:652px;color:#7c5cf0">账号中心</span>
<span class="td" style="left:1163px;top:652px;color:#7c5cf0">智能回复</span>
<span class="td" style="left:1252px;top:652px;color:#7c5cf0">代理设置</span>
<span class="td" style="left:1341px;top:652px;color:#ff4d4f">删除</span>
<div class="abs" style="left:1057px;top:656px;width:1px;height:13px;background:#eaeaea"></div>
<div class="abs" style="left:1146px;top:656px;width:1px;height:13px;background:#eaeaea"></div>
<div class="abs" style="left:1235px;top:656px;width:1px;height:13px;background:#eaeaea"></div>
<div class="abs" style="left:1324px;top:656px;width:1px;height:13px;background:#eaeaea"></div>
<div class="abs" style="left:480px;top:687px;width:929px;height:49px;border-bottom:1px solid #f0f0f0"></div>
<div class="cb" style="left:488px;top:703px"></div>
<span class="td" style="left:520px;top:701px">49</span>
<div class="abs" style="left:561px;top:696px;width:30px;height:30px"><svg width="30" height="30" viewBox="0 0 30 30"><circle cx="15" cy="15" r="15" fill="#fe4f0f"/><circle cx="12.5" cy="8.8" r="4" fill="none" stroke="#fff" stroke-width="1.9"/><circle cx="20.3" cy="9.3" r="3" fill="none" stroke="#fff" stroke-width="1.9"/><rect x="11" y="14.5" width="12.5" height="9" rx="2.2" fill="none" stroke="#fff" stroke-width="1.9"/><path d="M9.5 15.5 L5 18.8 L9.5 22 Z" fill="none" stroke="#fff" stroke-width="1.6" stroke-linejoin="round"/></svg></div>
<div class="abs" style="left:610px;top:695px;width:32px;height:32px"><svg class="avs" width="32" height="32" viewBox="0 0 32 32"><circle cx="16" cy="16" r="15" fill="#3dbb46"/><circle cx="16" cy="16" r="12.5" fill="none" stroke="#d9f3da" stroke-width="0.8"/><text x="17.5" y="13.5" text-anchor="middle" font-size="9" font-weight="700" fill="#fff" font-style="italic">万</text><text x="11.5" y="22" text-anchor="middle" font-size="7.5" font-weight="700" fill="#fff">村</text><text x="19.5" y="23" text-anchor="middle" font-size="7" font-weight="700" fill="#fff">乐</text></svg></div>
<span class="td" style="left:646px;top:700px">万村乐数字乡村</span>
<div class="tag" style="left:887px;top:700px">登录成功</div>
<span class="td" style="left:985px;top:701px;color:#7c5cf0">重新登录</span>
<span class="td" style="left:1074px;top:701px;color:#7c5cf0">账号中心</span>
<span class="td" style="left:1163px;top:701px;color:#7c5cf0">智能回复</span>
<span class="td" style="left:1252px;top:701px;color:#7c5cf0">代理设置</span>
<span class="td" style="left:1341px;top:701px;color:#ff4d4f">删除</span>
<div class="abs" style="left:1057px;top:705px;width:1px;height:13px;background:#eaeaea"></div>
<div class="abs" style="left:1146px;top:705px;width:1px;height:13px;background:#eaeaea"></div>
<div class="abs" style="left:1235px;top:705px;width:1px;height:13px;background:#eaeaea"></div>
<div class="abs" style="left:1324px;top:705px;width:1px;height:13px;background:#eaeaea"></div>
<div class="abs" style="left:480px;top:736px;width:929px;height:49px;border-bottom:1px solid #f0f0f0"></div>
<div class="cb" style="left:488px;top:752px"></div>
<span class="td" style="left:520px;top:750px">48</span>
<div class="abs" style="left:561px;top:745px;width:30px;height:30px"><svg width="30" height="30" viewBox="0 0 30 30"><circle cx="15" cy="15" r="15" fill="#0f0b12"/><g transform="translate(-1,0)"><path d="M17 6 V19 A4.3 4.3 0 1 1 12.7 14.7" stroke="#25f4ee" stroke-width="3" fill="none" transform="translate(-0.9,-0.7)"/><path d="M17 6 V19 A4.3 4.3 0 1 1 12.7 14.7 M17 6.5 C 17.5 9.5, 20 11.5, 23 11.5" stroke="#fe2c55" stroke-width="3" fill="none" transform="translate(0.9,0.7)"/><path d="M17 6 V19 A4.3 4.3 0 1 1 12.7 14.7 M17 6.5 C 17.5 9.5, 20 11.5, 23 11.5" stroke="#fff" stroke-width="2.6" fill="none"/></g></svg></div>
<div class="abs" style="left:610px;top:744px;width:32px;height:32px"><svg class="avs" width="32" height="32" viewBox="0 0 32 32"><circle cx="16" cy="16" r="15" fill="#3dbb46"/><circle cx="16" cy="16" r="12.5" fill="none" stroke="#d9f3da" stroke-width="0.8"/><text x="17.5" y="13.5" text-anchor="middle" font-size="9" font-weight="700" fill="#fff" font-style="italic">万</text><text x="11.5" y="22" text-anchor="middle" font-size="7.5" font-weight="700" fill="#fff">村</text><text x="19.5" y="23" text-anchor="middle" font-size="7" font-weight="700" fill="#fff">乐</text></svg></div>
<span class="td" style="left:646px;top:749px">万村乐数字乡村</span>
<div class="tag" style="left:887px;top:749px">登录成功</div>
<span class="td" style="left:985px;top:750px;color:#7c5cf0">重新登录</span>
<span class="td" style="left:1074px;top:750px;color:#7c5cf0">账号中心</span>
<span class="td" style="left:1163px;top:750px;color:#7c5cf0">智能回复</span>
<span class="td" style="left:1252px;top:750px;color:#7c5cf0">代理设置</span>
<span class="td" style="left:1341px;top:750px;color:#ff4d4f">删除</span>
<div class="abs" style="left:1057px;top:754px;width:1px;height:13px;background:#eaeaea"></div>
<div class="abs" style="left:1146px;top:754px;width:1px;height:13px;background:#eaeaea"></div>
<div class="abs" style="left:1235px;top:754px;width:1px;height:13px;background:#eaeaea"></div>
<div class="abs" style="left:1324px;top:754px;width:1px;height:13px;background:#eaeaea"></div>
<div class="abs" style="left:480px;top:785px;width:929px;height:49px;border-bottom:1px solid #f0f0f0"></div>
<div class="cb" style="left:488px;top:801px"></div>
<span class="td" style="left:520px;top:799px">47</span>
<div class="abs" style="left:561px;top:794px;width:30px;height:30px"><svg width="30" height="30" viewBox="0 0 30 30"><circle cx="15" cy="15" r="15" fill="#f5d03f"/><path d="M4 20 C 3 14, 9 8, 14 7 C 17 6.5, 18 8.5, 17 11 C 20 9.5, 23 10, 23 12.5 C 26 14, 25 20, 20 23 C 15 26, 6 26, 4 20 Z" fill="#e3262f"/><ellipse cx="13" cy="19.5" rx="7" ry="4.6" fill="#fff"/><ellipse cx="12" cy="20" rx="3" ry="2.4" fill="#1a1a1a"/><circle cx="13" cy="19" r="0.8" fill="#fff"/><path d="M20 5.5 A6 6 0 0 1 26 11.5 M20 8.5 A3 3 0 0 1 23 11.5" stroke="#e9a531" stroke-width="1.2" fill="none"/></svg></div>
<div class="abs" style="left:610px;top:793px;width:32px;height:32px"><div class="av" style="background:#bfbfbf"></div></div>
<span class="td" style="left:646px;top:798px">智慧数字乡村</span>
<div class="tag" style="left:887px;top:798px">登录成功</div>
<span class="td" style="left:985px;top:799px;color:#7c5cf0">重新登录</span>
<span class="td" style="left:1074px;top:799px;color:#7c5cf0">账号中心</span>
<span class="td" style="left:1163px;top:799px;color:#7c5cf0">智能回复</span>
<span class="td" style="left:1252px;top:799px;color:#7c5cf0">代理设置</span>
<span class="td" style="left:1341px;top:799px;color:#ff4d4f">删除</span>
<div class="abs" style="left:1057px;top:803px;width:1px;height:13px;background:#eaeaea"></div>
<div class="abs" style="left:1146px;top:803px;width:1px;height:13px;background:#eaeaea"></div>
<div class="abs" style="left:1235px;top:803px;width:1px;height:13px;background:#eaeaea"></div>
<div class="abs" style="left:1324px;top:803px;width:1px;height:13px;background:#eaeaea"></div>
<svg class="abs" style="left:1296px;top:857px" width="9" height="12" viewBox="0 0 9 12" fill="none" stroke="#bfbfbf" stroke-width="1.2"><path d="M7 1 L2 6 L7 11"/></svg>
<div class="abs" style="left:1313px;top:851px;width:24px;height:24px;border:1px solid #7d62e8;border-radius:6px;color:#7d62e8;font-size:14px;line-height:22px;text-align:center;font-weight:700">1</div>
<span class="abs" style="left:1341px;top:853px;width:16px;text-align:center;font-size:14px;line-height:20px;color:#1f1f1f">2</span>
<span class="abs" style="left:1365px;top:853px;width:16px;text-align:center;font-size:14px;line-height:20px;color:#1f1f1f">3</span>
<svg class="abs" style="left:1393px;top:857px" width="9" height="12" viewBox="0 0 9 12" fill="none" stroke="#1f1f1f" stroke-width="1.2"><path d="M2 1 L7 6 L2 11"/></svg>
</div>
</body></html>
